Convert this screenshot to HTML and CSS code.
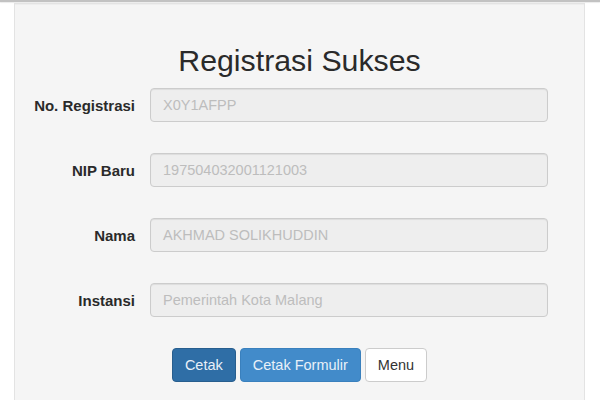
FILE: index.html
```html
<!DOCTYPE html>
<html>
<head>
<meta charset="utf-8">
<link rel="stylesheet" href="styles.css">
</head>
<body>
<div class="topbar"></div>
<div class="wrap">
  <div class="panel">
    <h1 class="title">Registrasi Sukses</h1>
    <div class="form">
      <label class="label">No. Registrasi</label>
      <div class="input">X0Y1AFPP</div>
      <label class="label">NIP Baru</label>
      <div class="input">197504032001121003</div>
      <label class="label">Nama</label>
      <div class="input">AKHMAD SOLIKHUDDIN</div>
      <label class="label">Instansi</label>
      <div class="input">Pemerintah Kota Malang</div>
    </div>
    <div class="actions">
      <button class="btn btn-dark">Cetak</button>
      <button class="btn btn-blue">Cetak Formulir</button>
      <button class="btn btn-white">Menu</button>
    </div>
  </div>
</div>
</body>
</html>
```
FILE: styles.css
```css
html, body {
  margin: 0;
  padding: 0;
  height: 100%;
  background: #ffffff;
  font-family: "Liberation Sans", Arial, sans-serif;
  overflow: hidden;
}
.topbar {
  height: 2px;
  background: #c2c2c2;
  box-shadow: 0 1px 1px rgba(0,0,0,0.08);
}
.wrap {
  padding: 1px 15px 0 14px;
  height: 100%;
  box-sizing: border-box;
}
.panel {
  background: #f5f5f5;
  border: 1px solid #e3e3e3;
  border-bottom: none;
  height: 100%;
  box-sizing: border-box;
  box-shadow: inset 0 1px 1px rgba(0,0,0,0.03);
}
.title {
  margin: 40px 0 11px;
  font-size: 30.3px;
  font-weight: normal;
  line-height: 33px;
  color: #2a2a2a;
  text-align: center;
}
.form {
  display: grid;
  grid-template-columns: 120px 1fr;
  column-gap: 15px;
  row-gap: 31px;
  padding-right: 36px;
  align-items: center;
}
.label {
  text-align: right;
  font-weight: bold;
  font-size: 15px;
  color: #2a2a2a;
}
.input {
  height: 34px;
  box-sizing: border-box;
  padding: 8px 12px;
  font-size: 14.5px;
  line-height: 17px;
  color: #bdbdbd;
  background: #eeeeee;
  border: 1px solid #cccccc;
  border-radius: 4px;
  box-shadow: inset 0 1px 1px rgba(0,0,0,0.075);
}
.actions {
  display: flex;
  justify-content: center;
  gap: 4px;
  margin-top: 31px;
}
.btn {
  height: 34px;
  box-sizing: border-box;
  padding: 6px 12px;
  font-family: "Liberation Sans", Arial, sans-serif;
  font-size: 14.5px;
  line-height: 20px;
  border: 1px solid transparent;
  border-radius: 4px;
}
.btn-dark {
  background: #2f6ea6;
  border-color: #285e8e;
  color: #e8f0f8;
}
.btn-blue {
  background: #428bca;
  border-color: #3a80bd;
  color: #e8f0f8;
}
.btn-white {
  background: #ffffff;
  border-color: #cccccc;
  color: #333333;
}
```
